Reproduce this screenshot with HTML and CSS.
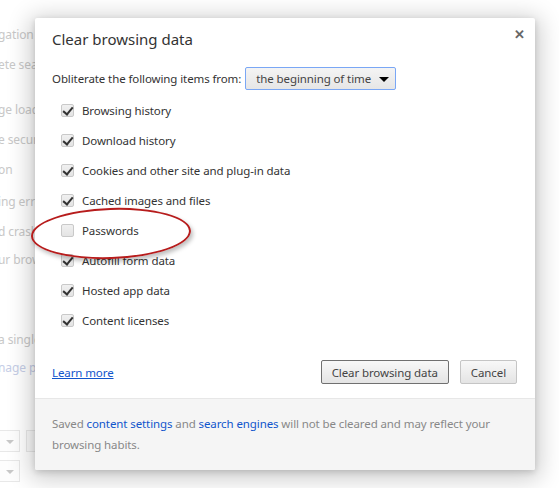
FILE: index.html
```html
<!DOCTYPE html>
<html>
<head>
<meta charset="utf-8">
<link rel="stylesheet" href="styles.css">
</head>
<body>
<div class="page">
  <div class="bg">
    <div class="bgline l1">gation conflicts</div>
    <div class="bgline l2">ete search</div>
    <div class="bgline l3">ge load</div>
    <div class="bgline l4">e security</div>
    <div class="bgline l5">on</div>
    <div class="bgline l6">ing errors</div>
    <div class="bgline l7">d crash</div>
    <div class="bgline l8">ur browser</div>
    <div class="bgline l9">a single</div>
    <div class="bgline l10 blue">nage passwords</div>
    <div class="bgselects">
      <div class="bgrow"><span class="bgsel"><span class="bgarrow"></span></span><span class="bgsel2"></span></div>
      <div class="bgrow"><span class="bgsel"><span class="bgarrow"></span></span></div>
    </div>
  </div>

  <div class="dialog">
    <div class="close">&#x2715;</div>
    <div class="main">
      <h1 class="title">Clear browsing data</h1>
      <div class="period">
        <span>Obliterate the following items from:</span>
        <span class="select">the beginning of time<span class="arrow"></span></span>
      </div>
      <ul class="items">
        <li><span class="cb checked"></span>Browsing history</li>
        <li><span class="cb checked"></span>Download history</li>
        <li><span class="cb checked"></span>Cookies and other site and plug-in data</li>
        <li><span class="cb checked"></span>Cached images and files</li>
        <li><span class="cb"></span>Passwords</li>
        <li><span class="cb checked"></span>Autofill form data</li>
        <li><span class="cb checked"></span>Hosted app data</li>
        <li><span class="cb checked"></span>Content licenses</li>
      </ul>
      <div class="actions">
        <a class="learn">Learn more</a>
        <div class="buttons">
          <span class="btn primary">Clear browsing data</span>
          <span class="btn">Cancel</span>
        </div>
      </div>
    </div>
    <div class="footer">
      Saved <a>content settings</a> and <a>search engines</a> will not be cleared and may reflect your browsing habits.
    </div>
  </div>
  <div class="ring"></div>
</div>
</body>
</html>
```
FILE: styles.css
```css
* { box-sizing: border-box; }
html, body { margin: 0; padding: 0; }
body {
  width: 559px; height: 488px; overflow: hidden;
  background: #fff;
  font-family: "Noto Sans", "Open Sans", sans-serif;
  font-size: 11.5px;
  letter-spacing: -0.1px;
  color: #333;
}
.page { position: relative; width: 559px; height: 488px; overflow: hidden; }

.bg { padding-top: 27px; margin-left: -2px; color: #c8c8c8; font-size: 12px; }
.bgline { height: 16px; line-height: 16px; white-space: nowrap; }
.bgline.blue { color: #c5cde6; }
.l2 { margin-top: 14px; }
.l3 { margin-top: 29px; }
.l4 { margin-top: 14px; }
.l5 { margin-top: 14px; }
.l6 { margin-top: 16px; }
.l7 { margin-top: 14px; }
.l8 { margin-top: 12px; }
.l9 { margin-top: 64px; }
.l10 { margin-top: 12px; }
.bgselects { margin-top: 54px; display: flex; flex-direction: column; gap: 8px; }
.bgrow { display: flex; gap: 6px; height: 22px; }
.bgsel { width: 22px; height: 22px; border: 1px solid #e8e8e8; border-left: none; position: relative; background: #fdfdfd; }
.bgsel2 { width: 20px; height: 22px; border: 1px solid #e8e8e8; background: #fafafa; }
.bgarrow { position: absolute; left: 8px; top: 9px; border-left: 4px solid transparent; border-right: 4px solid transparent; border-top: 4px solid #c8c8c8; }

.dialog {
  position: absolute; left: 35px; top: 18px; width: 500px; height: 452px;
  background: #fff;
  border-radius: 2px;
  box-shadow: 0 4px 23px 5px rgba(0,0,0,0.2), 0 2px 6px rgba(0,0,0,0.15);
  display: flex; flex-direction: column;
}
.close { position: absolute; right: 10px; top: 7px; font-size: 13px; font-weight: bold; color: #666; letter-spacing: 0; }
.main { flex: 1; padding: 11px 18px 0 17px; display: flex; flex-direction: column; }
.title { margin: 0; font-size: 15px; font-weight: normal; color: #333; height: 20px; line-height: 20px; letter-spacing: 0; }
.period { margin-top: 18px; display: flex; align-items: center; gap: 4px; height: 22px; }
.select {
  position: relative; display: inline-flex; align-items: center;
  width: 151px; height: 23px; padding-left: 10px;
  border: 1px solid #7aa7f5; border-radius: 2px;
  background: linear-gradient(#f4f4f4, #e6e6e6);
  color: #444;
}
.arrow { position: absolute; right: 6px; top: 9px; border-left: 5px solid transparent; border-right: 5px solid transparent; border-top: 5px solid #000; }
.items { list-style: none; margin: 6px 0 0 0; padding: 0; }
.items li { display: flex; align-items: center; height: 30px; padding-left: 9px; color: #333; }
.cb {
  width: 13px; height: 13px; margin-right: 8px; position: relative;
  border: 1px solid #c9c9c9; border-radius: 2px;
  background: linear-gradient(#f0f0f0, #e4e4e4);
}
.cb.checked::after {
  content: ""; position: absolute; left: 3px; top: 0px; width: 4px; height: 8px;
  border-right: 2.5px solid #333; border-bottom: 2.5px solid #333;
  transform: rotate(40deg);
}
.actions { margin-top: 25px; display: flex; align-items: center; justify-content: space-between; }
.learn { color: #15c; text-decoration: underline; }
.buttons { display: flex; gap: 11px; }
.btn {
  height: 24px; padding: 0 10px; display: inline-flex; align-items: center;
  border: 1px solid #c5c5c5; border-radius: 2px;
  background: linear-gradient(#f8f8f8, #e4e4e4);
  color: #444;
}
.btn.primary { border-color: #707070; }
.footer {
  height: 72px; background: #f5f5f5; border-top: 1px solid #e7e7e7;
  padding: 14px 17px 0 17px; line-height: 21px; color: #888; border-radius: 0 0 2px 2px;
}
.footer a { color: #15c; }

.ring {
  position: absolute; left: 31px; top: 208px; width: 160px; height: 51px;
  border: 2px solid #b71c1c; border-radius: 50%;
  transform: rotate(-2deg);
  box-shadow: 2px 3px 4px rgba(0,0,0,0.25);
}
```
